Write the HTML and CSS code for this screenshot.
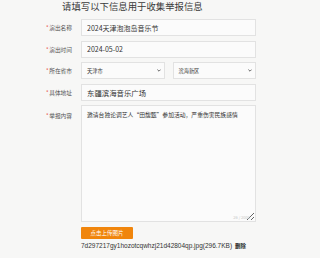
FILE: index.html
```html
<!DOCTYPE html>
<html lang="zh-CN">
<head>
  <meta charset="UTF-8" />
  <meta name="viewport" content="width=device-width, initial-scale=1.0"/>
  <title>举报信息</title>
  <link rel="stylesheet" href="styles.css">
</head>
<body>

<div class="page">
  <h1 class="title">请填写以下信息用于收集举报信息</h1>

  <form class="report">
    <div class="row">
      <label class="lbl"><span class="req">*</span>演出名称</label>
      <input class="field" type="text" value="2024天津泡泡岛音乐节">
    </div>

    <div class="row">
      <label class="lbl"><span class="req">*</span>演出时间</label>
      <input class="field" type="text" value="2024-05-02">
    </div>

    <div class="row">
      <label class="lbl"><span class="req">*</span>所在省市</label>
      <div class="selects">
        <div class="select">
          <span>天津市</span>
          <svg width="4" height="3" viewBox="0 0 4 3"><path d="M0.4 0.6 L2 2.2 L3.6 0.6" fill="none" stroke="#444" stroke-width="0.8"/></svg>
        </div>
        <div class="select">
          <span>滨海新区</span>
          <svg width="4" height="3" viewBox="0 0 4 3"><path d="M0.4 0.6 L2 2.2 L3.6 0.6" fill="none" stroke="#444" stroke-width="0.8"/></svg>
        </div>
      </div>
    </div>

    <div class="row">
      <label class="lbl"><span class="req">*</span>具体地址</label>
      <input class="field big" type="text" value="东疆滨海音乐广场">
    </div>

    <div class="row top">
      <label class="lbl"><span class="req">*</span>举报内容</label>
      <div class="area-wrap">
        <textarea class="area">邀请台独论调艺人“田馥甄”参加活动，严重伤害民族感情</textarea>
        <span class="count">26 / 2000</span>
      </div>
    </div>

    <div class="row upload">
      <span></span>
      <div>
        <button type="button" class="btn">点击上传图片</button>
        <div class="file">7d297217gy1hozotcqwhzj21d42804qp.jpg(296.7KB)<a class="del">删除</a></div>
      </div>
    </div>
  </form>
</div>

</body>
</html>
```

FILE: styles.css
```css
* { box-sizing: border-box; margin: 0; padding: 0; }

html, body {
  width: 100%;
  height: 100%;
  overflow: hidden;
  background: #f7f7f6;
  font-family: "Noto Sans CJK SC", "Noto Sans", sans-serif;
  color: #333;
}

.title {
  height: 19px;
  padding-left: 62px;
  font-size: 9.4px;
  line-height: 12px;
  font-weight: normal;
  color: #3a3a3a;
}

.row {
  display: grid;
  grid-template-columns: 72px 175px;
  column-gap: 9px;
  align-items: center;
  margin-bottom: 4.5px;
}

.row.top { align-items: start; }

.lbl {
  text-align: right;
  font-size: 5.7px;
  color: #555;
  white-space: nowrap;
}

.row.top .lbl { padding-top: 6px; }

.req { color: #e84a3a; margin-right: 0.5px; }

.field {
  width: 100%;
  height: 17px;
  padding: 0 5px;
  border: 1px solid #e2e2e2;
  background: #fbfbfb;
  font-family: "Noto Sans CJK SC", "Noto Sans", sans-serif;
  font-size: 7px;
  color: #333;
  outline: none;
}

.field.big { font-size: 7.4px; }

.selects {
  display: flex;
  gap: 8px;
}

.select {
  flex: 1;
  height: 17px;
  display: flex;
  align-items: center;
  justify-content: space-between;
  padding: 0 3px 0 5px;
  border: 1px solid #e2e2e2;
  background: #fbfbfb;
  font-size: 5.2px;
  color: #333;
}

.area-wrap { position: relative; }

.area {
  display: block;
  width: 100%;
  height: 117px;
  padding: 5px;
  border: 1px solid #e2e2e2;
  background: #fbfbfb;
  font-family: "Noto Sans CJK SC", "Noto Sans", sans-serif;
  font-size: 5.8px;
  line-height: 1.5;
  color: #333;
  outline: none;
}

.count {
  position: absolute;
  right: 6px;
  bottom: 2px;
  font-size: 4px;
  color: #c8c8c8;
}

.upload { margin-top: 0.5px; }

.btn {
  display: block;
  width: 52px;
  height: 12px;
  border: none;
  border-radius: 1px;
  background: #f0850c;
  color: #fff;
  font-family: "Noto Sans CJK SC", "Noto Sans", sans-serif;
  font-size: 5.5px;
}

.file {
  margin-top: 2px;
  font-family: "Liberation Sans", "Noto Sans CJK SC", sans-serif;
  font-size: 6.5px;
  line-height: 10px;
  color: #333;
  white-space: nowrap;
}

.del {
  margin-left: 3px;
  font-family: "Noto Sans CJK SC", sans-serif;
  font-size: 5.5px;
  font-weight: bold;
  color: #222;
}
```
